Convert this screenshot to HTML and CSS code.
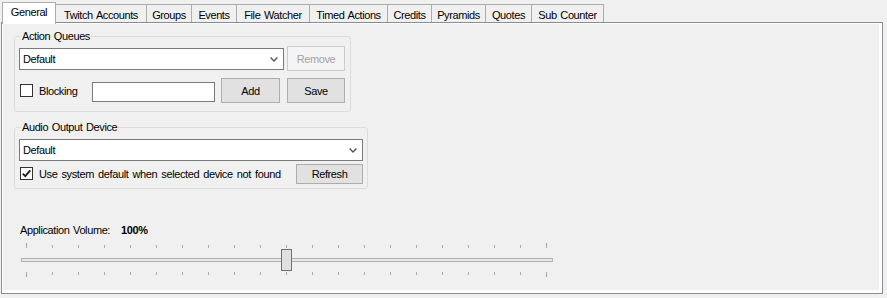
FILE: index.html
```html
<!DOCTYPE html>
<html>
<head>
<meta charset="utf-8">
<link rel="stylesheet" href="styles.css">
</head>
<body>
<div class="tabctl">
  <div class="tabs">
    <div class="tab sel t-general">General</div>
    <div class="tab t-twitch">Twitch Accounts</div>
    <div class="tab t-groups">Groups</div>
    <div class="tab t-events">Events</div>
    <div class="tab t-file">File Watcher</div>
    <div class="tab t-timed">Timed Actions</div>
    <div class="tab t-credits">Credits</div>
    <div class="tab t-pyramids">Pyramids</div>
    <div class="tab t-quotes">Quotes</div>
    <div class="tab t-sub">Sub Counter</div>
  </div>
  <div class="page">
    <div class="page-inner">
      <fieldset class="grp grp-queues">
        <legend>Action Queues</legend>
        <div class="row row-q1">
          <div class="combo combo-q"><span>Default</span><svg class="chev" width="8" height="5" viewBox="0 0 8 5"><polyline points="0.6,0.6 4,4 7.4,0.6" fill="none" stroke="#555" stroke-width="1.4"/></svg></div>
          <button class="btn btn-remove" disabled>Remove</button>
        </div>
        <div class="row row-q2">
          <span class="check"></span>
          <span class="cb-label lbl-blocking">Blocking</span>
          <span class="textbox"></span>
          <button class="btn btn-add">Add</button>
          <button class="btn btn-save">Save</button>
        </div>
      </fieldset>
      <fieldset class="grp grp-audio">
        <legend>Audio Output Device</legend>
        <div class="combo combo-a"><span>Default</span><svg class="chev" width="8" height="5" viewBox="0 0 8 5"><polyline points="0.6,0.6 4,4 7.4,0.6" fill="none" stroke="#555" stroke-width="1.4"/></svg></div>
        <div class="row row-a2">
          <span class="check checked"><svg width="11" height="11" viewBox="0 0 11 11"><path d="M1.8 5.6 L4.3 8.2 L9.3 2.4" fill="none" stroke="#1f1f1f" stroke-width="1.9"/></svg></span>
          <span class="cb-label lbl-default">Use system default when selected device not found</span>
          <button class="btn btn-refresh">Refresh</button>
        </div>
      </fieldset>
      <div class="vol-label"><span>Application Volume:</span><b class="vol-value">100%</b></div>
      <div class="slider">
        <div class="ticks ticks-top">
          <i class="tick end"></i><i class="tick"></i><i class="tick"></i><i class="tick"></i><i class="tick"></i><i class="tick"></i><i class="tick"></i><i class="tick"></i><i class="tick"></i><i class="tick"></i><i class="tick"></i><i class="tick"></i><i class="tick"></i><i class="tick"></i><i class="tick"></i><i class="tick"></i><i class="tick"></i><i class="tick"></i><i class="tick"></i><i class="tick"></i><i class="tick end"></i>
        </div>
        <div class="track-area">
          <div class="track"></div>
          <div class="thumb"></div>
        </div>
        <div class="ticks ticks-bottom">
          <i class="tick end"></i><i class="tick"></i><i class="tick"></i><i class="tick"></i><i class="tick"></i><i class="tick"></i><i class="tick"></i><i class="tick"></i><i class="tick"></i><i class="tick"></i><i class="tick"></i><i class="tick"></i><i class="tick"></i><i class="tick"></i><i class="tick"></i><i class="tick"></i><i class="tick"></i><i class="tick"></i><i class="tick"></i><i class="tick"></i><i class="tick end"></i>
        </div>
      </div>
    </div>
  </div>
</div>
</body>
</html>
```
FILE: styles.css
```css
* { box-sizing: border-box; }
html, body {
  margin: 0;
  padding: 0;
  background: #f0f0f0;
}
body {
  width: 887px;
  height: 298px;
  overflow: hidden;
  font-family: "Liberation Sans", Arial, sans-serif;
  font-size: 11px;
  letter-spacing: -0.4px;
  word-spacing: 1px;
  color: #000;
}
.tabs {
  display: flex;
  align-items: flex-start;
  height: 20px;
  margin: 2px 0 0 2px;
}
.tab {
  margin-top: 2px;
  height: 18px;
  margin-left: -1px;
  border: 1px solid #acacac;
  border-bottom: none;
  background: #f0f0f0;
  text-align: center;
  line-height: 18px;
  padding-top: 1px;
  white-space: nowrap;
}
.tab.sel {
  position: relative;
  z-index: 1;
  margin-top: 0;
  margin-left: 0;
  height: 22px;
  background: #fff;
  line-height: 18px;
  padding-top: 0;
}
.t-general { width: 54px; }
.t-twitch { width: 92px; }
.t-groups { width: 46px; }
.t-events { width: 46px; }
.t-file { width: 74px; }
.t-timed { width: 79px; }
.t-credits { width: 45px; }
.t-pyramids { width: 55px; }
.t-quotes { width: 47px; }
.t-sub { width: 73px; }

.page {
  margin-left: 1px;
  width: 882px;
  height: 272px;
  border: 1px solid #898c95;
}
.page-inner {
  height: 100%;
  border-style: solid;
  border-color: #fff;
  border-width: 1px 3px 3px 1px;
  background: #f0f0f0;
  overflow: hidden;
}
.grp {
  margin: 6px 0 0 11px;
  border: 1px solid #dcdcdc;
  border-radius: 3px;
  min-width: 0;
}
.grp legend {
  margin-left: 2px;
  padding: 0 1px;
  line-height: 13px;
}
.grp-queues {
  width: 337px;
  padding: 3px 4px 8px 4px;
}
.grp-audio {
  width: 354px;
  margin-top: 9px;
  padding: 5px 4px 4px 4px;
}
.row {
  display: flex;
  align-items: flex-start;
}
.row-q1 { height: 25px; }
.row-q2 { height: 25px; margin-top: 7px; }
.row-a2 { height: 20px; margin-top: 3px; }

.combo {
  display: flex;
  align-items: center;
  height: 22px;
  background: #fff;
  border: 1px solid #7a7a7a;
  padding-left: 3px;
}
.combo .chev {
  margin-left: auto;
  margin-right: 5px;
}
.combo-q { width: 265px; margin-top: 2px; }
.combo-a { width: 344px; }

.btn {
  font: inherit;
  letter-spacing: inherit;
  word-spacing: inherit;
  color: #000;
  background: #e1e1e1;
  border: 1px solid #adadad;
  padding: 0;
  margin: 0;
  height: 25px;
  text-align: center;
}
.btn-remove {
  width: 58px;
  margin-left: 3px;
  background: #f4f4f4;
  border-color: #cccccc;
  color: #a3a3a3;
}
.btn-add { width: 59px; margin-left: 6px; }
.btn-save { width: 58px; margin-left: 7px; }
.btn-refresh {
  width: 67px;
  height: 20px;
  margin-left: auto;
}

.check {
  display: flex;
  align-items: center;
  justify-content: center;
  width: 13px;
  height: 13px;
  margin-left: 1px;
  background: #fff;
  border: 1px solid #333;
}
.row-q2 .check { margin-top: 6px; }
.row-a2 .check { margin-top: 3px; }
.cb-label {
  margin-left: 6px;
  white-space: nowrap;
}
.row-q2 .cb-label { line-height: 26px; }
.row-a2 .cb-label { line-height: 20px; }
.lbl-blocking { width: 53px; }
.lbl-default { word-spacing: 1.5px; }
.textbox {
  width: 123px;
  height: 20px;
  margin-top: 4px;
  background: #fff;
  border: 1px solid #7a7a7a;
}

.vol-label {
  display: flex;
  margin: 35px 0 0 17px;
  line-height: 13px;
  white-space: nowrap;
}
.vol-value {
  margin-left: 11px;
  font-weight: bold;
}
.slider {
  width: 532px;
  margin: 6px 0 0 18px;
}
.ticks {
  display: flex;
  justify-content: space-between;
  height: 5px;
  margin: 0 6px 0 5px;
}
.ticks-top { align-items: flex-end; }
.ticks-bottom { align-items: flex-start; margin-top: 1px; }
.tick {
  display: block;
  width: 1px;
  height: 3px;
  background: #a9a9a9;
}
.tick.end { height: 5px; }
.track-area {
  position: relative;
  display: flex;
  align-items: center;
  height: 22px;
  margin-top: 1px;
}
.track {
  width: 100%;
  height: 4px;
  border: 1px solid #b0b0b0;
  background: #e7e7e7;
}
.thumb {
  position: absolute;
  left: 260px;
  top: 0;
  width: 11px;
  height: 22px;
  border: 1px solid #717171;
  background: #e0e0e0;
}
```
